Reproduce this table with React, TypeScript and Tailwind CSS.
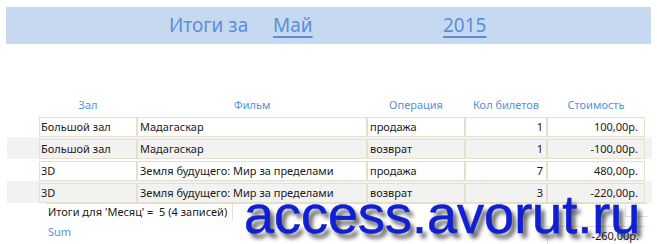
const rows = [
  { hall: 'Большой зал', film: 'Мадагаскар', op: 'продажа', qty: 1, cost: '100,00р.' },
  { hall: 'Большой зал', film: 'Мадагаскар', op: 'возврат', qty: 1, cost: '-100,00р.' },
  { hall: '3D', film: 'Земля будущего: Мир за пределами', op: 'продажа', qty: 7, cost: '480,00р.' },
  { hall: '3D', film: 'Земля будущего: Мир за пределами', op: 'возврат', qty: 3, cost: '-220,00р.' },
];

const cols = 'grid grid-cols-[98px_230px_98px_82px_98px]';
const cell = 'h-[20px] border border-[#e6dfcc] flex items-center whitespace-nowrap overflow-hidden';

export default function App() {
  return (
    <div
      className="relative w-[657px] h-[244px] overflow-hidden bg-white text-[#1a1a1a]"
      style={{ fontFamily: '"Noto Sans", "Open Sans", sans-serif' }}
    >
      {/* Report title band */}
      <div className="mt-[7px] mx-[6px] h-[37px] bg-[#c6d9f1] flex items-center pl-[163px] text-[19px] text-[#5a8fd8] leading-none">
        <span className="w-[104px]">Итоги за</span>
        <span className="w-[170px] underline underline-offset-[4px] decoration-[1.5px]">Май</span>
        <span className="underline underline-offset-[4px] decoration-[1.5px]">2015</span>
      </div>

      {/* Column headers */}
      <div className={`${cols} ml-[39px] mt-[55px] text-[11px] text-[#5a8fd8] leading-none`}>
        <div className="text-center">Зал</div>
        <div className="text-center">Фильм</div>
        <div className="text-center">Операция</div>
        <div className="text-center">Кол билетов</div>
        <div className="text-center">Стоимость</div>
      </div>

      {/* Detail rows */}
      <div className="mt-[5px] text-[11px]">
        {rows.map((r, i) => (
          <div key={i} className={`h-[22px] pt-[2px] ml-[7px] mr-[5px] ${i % 2 ? 'bg-[#f2f2f2]' : ''}`}>
            <div className={`${cols} ml-[32px]`}>
              <div className={`${cell} pl-[1px]`}>{r.hall}</div>
              <div className={`${cell} pl-[2px]`}>{r.film}</div>
              <div className={`${cell} pl-[2px]`}>{r.op}</div>
              <div className={`${cell} justify-end pr-[3px]`}>{r.qty}</div>
              <div className={`${cell} justify-end pr-[6px]`}>{r.cost}</div>
            </div>
          </div>
        ))}
      </div>

      {/* Group footer */}
      <div className="flex ml-[46px] mr-[9px] text-[11px]">
        <div className="w-[187px] h-[17px] border-t border-r border-[#e6dfcc] pl-[2px] flex items-center whitespace-nowrap">
          Итоги для 'Месяц' =&nbsp; 5 (4 записей)
        </div>
        <div className="flex-1 h-[17px] border-t border-[#e6dfcc] flex justify-end">
          <div className="w-[23px] h-[13px] border-l border-b border-[#e6dfcc]" />
        </div>
      </div>
      <div className="flex items-start mt-[2px] text-[11px]">
        <div className="ml-[48px] text-[#5a8fd8] pt-[2px]">Sum</div>
        <div className="ml-auto mr-[12px] w-[98px] h-[20px] border-l border-t border-[#e6dfcc] flex items-center justify-end pr-[6px] mt-[4px]">
          -260,00р.
        </div>
      </div>

      {/* Site watermark over the report */}
      <div
        className="absolute left-[244px] top-[187px] text-[54px] leading-none text-[#1020d0] whitespace-nowrap"
        style={{ fontFamily: '"Liberation Sans", Arial, sans-serif', textShadow: '4px 5px 4px rgba(0,0,0,0.65)', WebkitTextStroke: '0.6px #1020d0' }}
      >
        access.avorut.ru
      </div>
    </div>
  );
}
